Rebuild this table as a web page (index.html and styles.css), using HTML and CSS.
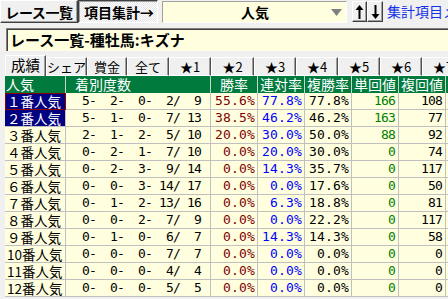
FILE: index.html
```html
<!DOCTYPE html>
<html lang="ja">
<head>
<meta charset="utf-8">
<link rel="stylesheet" href="styles.css">
</head>
<body>
<div class="app">
  <div class="toolbar">
    <div class="btn btn-list">レース一覧</div>
    <div class="btn btn-agg">項目集計→</div>
    <div class="combo">
      <span class="combo-text">人気</span>
      <svg class="combo-arrow" width="11" height="7" viewBox="0 0 11 7"><path d="M0 0H11L5.5 7Z" fill="#808080"/></svg>
    </div>
    <div class="btn arrow-btn arrow-up">
      <svg width="9" height="14" viewBox="0 0 9 14"><path d="M4.5 0L8.5 5H5.5V14H3.5V5H0.5Z" fill="#000"/></svg>
    </div>
    <div class="btn arrow-btn arrow-down">
      <svg width="9" height="14" viewBox="0 0 9 14"><path d="M4.5 14L8.5 9H5.5V0H3.5V9H0.5Z" fill="#000"/></svg>
    </div>
    <span class="menu-link">集計項目メニュー</span>
  </div>

  <div class="titlebox">レース一覧-種牡馬:キズナ</div>

  <div class="tabs">
    <div class="tab tab-sel">成績</div>
    <div class="tab w41">シェア</div>
    <div class="tab w40">賞金</div>
    <div class="tab">全て</div>
    <div class="tab">★1</div>
    <div class="tab w43">★2</div>
    <div class="tab">★3</div>
    <div class="tab">★4</div>
    <div class="tab">★5</div>
    <div class="tab">★6</div>
    <div class="tab">★7</div>
  </div>

  <div class="grid">
    <div class="hd hd-left">人気</div>
    <div class="hd hd-count">着別度数</div>
    <div class="hd">勝率</div>
    <div class="hd">連対率</div>
    <div class="hd">複勝率</div>
    <div class="hd">単回値</div>
    <div class="hd">複回値</div>
    <div class="hd"></div>

    <div class="cell lbl lbl-sel lbl-focus">１番人気</div><div class="cell cnt"> 5-  2-  0-  2/  9</div><div class="cell pct c-win">55.6%</div><div class="cell pct c-place">77.8%</div><div class="cell pct">77.8%</div><div class="cell num c-tan">166</div><div class="cell num">108</div><div class="cell"></div>
    <div class="cell lbl lbl-sel">２番人気</div><div class="cell cnt"> 5-  1-  0-  7/ 13</div><div class="cell pct c-win">38.5%</div><div class="cell pct c-place">46.2%</div><div class="cell pct">46.2%</div><div class="cell num c-tan">163</div><div class="cell num">77</div><div class="cell"></div>
    <div class="cell lbl">３番人気</div><div class="cell cnt"> 2-  1-  2-  5/ 10</div><div class="cell pct c-win">20.0%</div><div class="cell pct c-place">30.0%</div><div class="cell pct">50.0%</div><div class="cell num c-tan">88</div><div class="cell num">92</div><div class="cell"></div>
    <div class="cell lbl">４番人気</div><div class="cell cnt"> 0-  2-  1-  7/ 10</div><div class="cell pct c-win">0.0%</div><div class="cell pct c-place">20.0%</div><div class="cell pct">30.0%</div><div class="cell num c-tan">0</div><div class="cell num">74</div><div class="cell"></div>
    <div class="cell lbl">５番人気</div><div class="cell cnt"> 0-  2-  3-  9/ 14</div><div class="cell pct c-win">0.0%</div><div class="cell pct c-place">14.3%</div><div class="cell pct">35.7%</div><div class="cell num c-tan">0</div><div class="cell num">117</div><div class="cell"></div>
    <div class="cell lbl">６番人気</div><div class="cell cnt"> 0-  0-  3- 14/ 17</div><div class="cell pct c-win">0.0%</div><div class="cell pct c-place">0.0%</div><div class="cell pct">17.6%</div><div class="cell num c-tan">0</div><div class="cell num">50</div><div class="cell"></div>
    <div class="cell lbl">７番人気</div><div class="cell cnt"> 0-  1-  2- 13/ 16</div><div class="cell pct c-win">0.0%</div><div class="cell pct c-place">6.3%</div><div class="cell pct">18.8%</div><div class="cell num c-tan">0</div><div class="cell num">81</div><div class="cell"></div>
    <div class="cell lbl">８番人気</div><div class="cell cnt"> 0-  0-  2-  7/  9</div><div class="cell pct c-win">0.0%</div><div class="cell pct c-place">0.0%</div><div class="cell pct">22.2%</div><div class="cell num c-tan">0</div><div class="cell num">117</div><div class="cell"></div>
    <div class="cell lbl">９番人気</div><div class="cell cnt"> 0-  1-  0-  6/  7</div><div class="cell pct c-win">0.0%</div><div class="cell pct c-place">14.3%</div><div class="cell pct">14.3%</div><div class="cell num c-tan">0</div><div class="cell num">58</div><div class="cell"></div>
    <div class="cell lbl">10番人気</div><div class="cell cnt"> 0-  0-  0-  7/  7</div><div class="cell pct c-win">0.0%</div><div class="cell pct c-place">0.0%</div><div class="cell pct">0.0%</div><div class="cell num c-tan">0</div><div class="cell num">0</div><div class="cell"></div>
    <div class="cell lbl">11番人気</div><div class="cell cnt"> 0-  0-  0-  4/  4</div><div class="cell pct c-win">0.0%</div><div class="cell pct c-place">0.0%</div><div class="cell pct">0.0%</div><div class="cell num c-tan">0</div><div class="cell num">0</div><div class="cell"></div>
    <div class="cell lbl">12番人気</div><div class="cell cnt"> 0-  0-  0-  5/  5</div><div class="cell pct c-win">0.0%</div><div class="cell pct c-place">0.0%</div><div class="cell pct">0.0%</div><div class="cell num c-tan">0</div><div class="cell num">0</div><div class="cell"></div>
  </div>
</div>
</body>
</html>
```

FILE: styles.css
```css
html, body {
  margin: 0;
  padding: 0;
}
body {
  background: #f0f0f0;
  font-family: "Noto Sans CJK JP", sans-serif;
  color: #000;
}
.app {
  width: 448px;
  height: 299px;
  overflow: hidden;
  background: #f0f0f0;
}

/* toolbar */
.toolbar {
  display: flex;
  align-items: flex-start;
  height: 23px;
  white-space: nowrap;
}
.btn {
  box-sizing: border-box;
  height: 23px;
  display: flex;
  align-items: center;
  justify-content: center;
  font-weight: bold;
  font-size: 14px;
  line-height: 16px;
  background: #f0f0f0;
  border: 1px solid;
  border-color: #ffffff #404040 #404040 #ffffff;
  box-shadow: inset -1px -1px 0 #a0a0a0;
  flex: none;
}
.btn-list {
  width: 78px;
  letter-spacing: -0.4px;
}
.btn-agg {
  width: 80px;
  border-color: #404040 #ffffff #ffffff #404040;
  box-shadow: inset 1px 1px 0 #a0a0a0;
  background: repeating-conic-gradient(#ffffff 0 25%, #e4e4e4 0 50%) 0 0 / 2px 2px;
  padding-left: 2px;
}
.combo {
  box-sizing: border-box;
  width: 185px;
  height: 22px;
  margin-left: 4px;
  margin-top: 1px;
  background: #ffffe0;
  border: 1px solid;
  border-color: #a0a0a0 #ffffff #ffffff #a0a0a0;
  display: flex;
  align-items: center;
  flex: none;
}
.combo-text {
  margin-left: 78px;
  font-weight: bold;
  font-size: 14px;
  line-height: 16px;
}
.combo-arrow {
  margin-left: auto;
  margin-right: 4px;
  margin-top: 1px;
}
.arrow-btn {
  height: 21px;
  margin-top: 1px;
}
.arrow-up {
  width: 15px;
  margin-left: 5px;
}
.arrow-down {
  width: 16px;
}
.menu-link {
  margin-left: 4px;
  margin-top: 3px;
  font-size: 14px;
  line-height: 16px;
  color: #1430e8;
  flex: none;
}

/* title box */
.titlebox {
  box-sizing: border-box;
  margin: 5px 0 0 6px;
  height: 23px;
  background: #ffffe0;
  border-top: 1px solid #808080;
  border-left: 1px solid #808080;
  box-shadow: inset 1px 1px 0 #404040;
  padding-left: 3px;
  font-weight: bold;
  font-size: 15px;
  line-height: 21px;
  letter-spacing: 0;
  white-space: nowrap;
}

/* tabs */
.tabs {
  display: flex;
  align-items: flex-end;
  height: 25px;
  padding-left: 5px;
  white-space: nowrap;
}
.tab {
  box-sizing: border-box;
  width: 42px;
  height: 19px;
  flex: none;
  border-top: 1px solid #ffffff;
  border-left: 1px solid #ffffff;
  border-right: 1px solid #505050;
  box-shadow: inset -1px 0 0 #a0a0a0;
  font-size: 13px;
  line-height: 17px;
  text-align: center;
  border-bottom: 1px solid #ffffff;
}
.tab-sel {
  width: 41px;
  height: 21px;
  border-bottom: none;
  font-size: 14.5px;
  line-height: 18px;
}
.w40 { width: 40px; }
.w41 { width: 41px; }
.w43 { width: 43px; }

/* grid */
.grid {
  display: grid;
  grid-template-columns: 61px 145px 47px 47px 47px 47px 47px 47px;
  grid-auto-rows: 17px;
  margin-left: 5px;
  width: 488px;
}
.hd {
  box-sizing: border-box;
  background: #007a3d;
  color: #ffffff;
  border-right: 1px solid #c8d8c8;
  font-size: 14px;
  line-height: 17px;
  text-align: center;
  white-space: nowrap;
  overflow: hidden;
}
.hd-left {
  text-align: left;
  padding-left: 1px;
}
.hd-count {
  text-align: left;
  padding-left: 9px;
}
.cell {
  box-sizing: border-box;
  background: #ffffe0;
  border-right: 1px solid #c0c0c0;
  border-bottom: 1px solid #c0c0c0;
  white-space: pre;
  overflow: hidden;
  line-height: 16px;
}
.lbl {
  font-size: 13.5px;
  padding-left: 2px;
}
.lbl-sel {
  background: #000080;
  color: #ffffff;
}
.lbl-focus {
  border: 1px solid #8c0000;
  padding-left: 1px;
  line-height: 15px;
}
.cnt, .pct, .num {
  font-family: "DejaVu Sans Mono", monospace;
  font-size: 13px;
}
.cnt {
  padding-left: 9px;
  letter-spacing: -0.83px;
}
.pct {
  text-align: right;
  padding-right: 2px;
  letter-spacing: 0.17px;
}
.num {
  text-align: right;
  padding-right: 3px;
  letter-spacing: -0.83px;
}
.c-win { color: #800000; }
.c-place { color: #0000ff; }
.c-tan { color: #008000; }
```
